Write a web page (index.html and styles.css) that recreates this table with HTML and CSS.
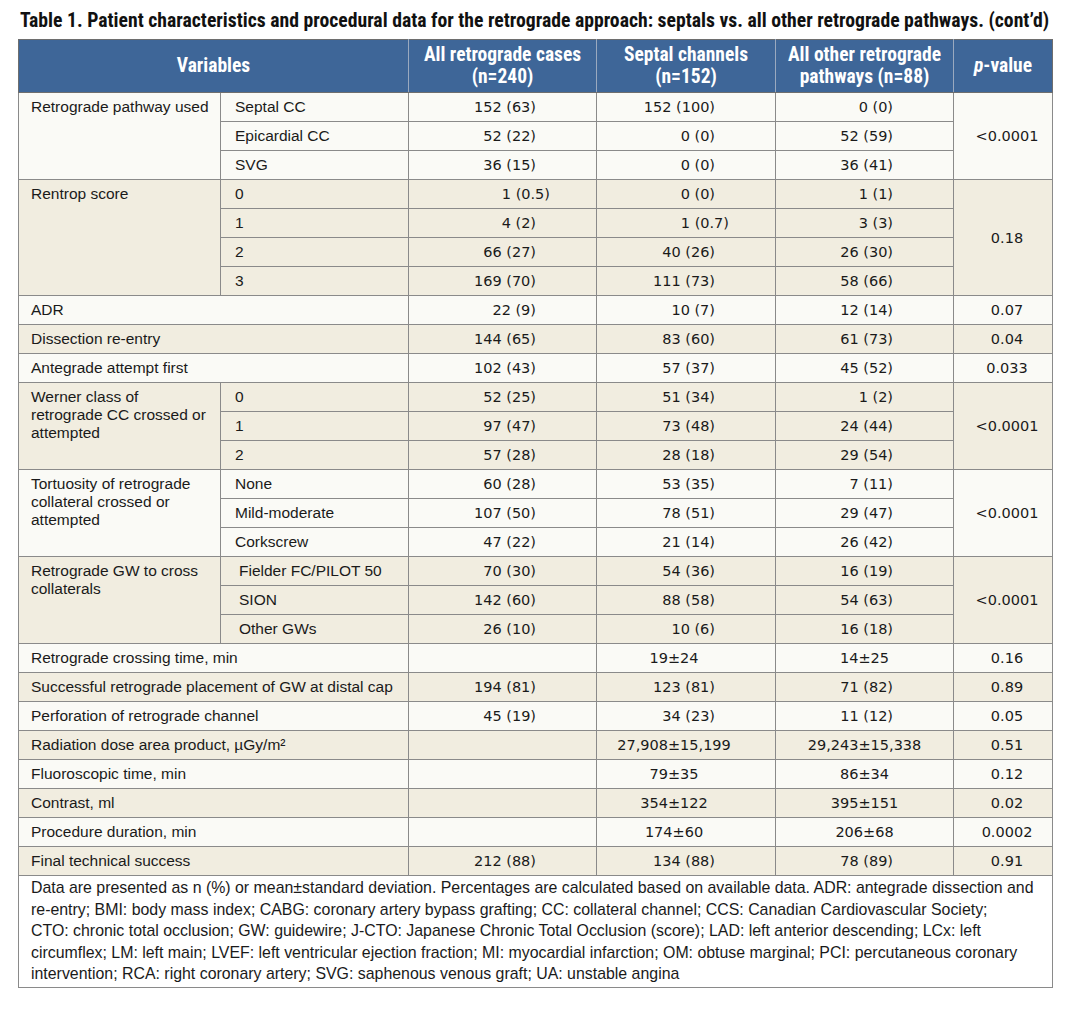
FILE: index.html
```html
<!DOCTYPE html>
<html lang="en">
<head>
<meta charset="utf-8">
<title>Table 1</title>
<link rel="stylesheet" href="styles.css">
</head>
<body>
<h1 class="caption">Table 1. Patient characteristics and procedural data for the retrograde approach: septals vs. all other retrograde pathways. (cont’d)</h1>
<table class="data">
  <colgroup>
    <col class="w1"><col class="w2"><col class="w3"><col class="w4"><col class="w5"><col class="w6">
  </colgroup>
  <thead>
    <tr>
      <th colspan="2">Variables</th>
      <th>All retrograde cases<br>(n=240)</th>
      <th>Septal channels<br>(n=152)</th>
      <th>All other retrograde<br>pathways (n=88)</th>
      <th><i>p</i>-value</th>
    </tr>
  </thead>
  <tbody>
    <tr class="lt">
      <td class="lbl" rowspan="3">Retrograde pathway used</td>
      <td class="sub">Septal CC</td><td class="n">152 (63)</td><td class="n">152 (100)</td><td class="n">0 (0)</td>
      <td class="p" rowspan="3">&lt;0.0001</td>
    </tr>
    <tr class="lt"><td class="sub">Epicardial CC</td><td class="n">52 (22)</td><td class="n">0 (0)</td><td class="n">52 (59)</td></tr>
    <tr class="lt"><td class="sub">SVG</td><td class="n">36 (15)</td><td class="n">0 (0)</td><td class="n">36 (41)</td></tr>

    <tr class="bg">
      <td class="lbl" rowspan="4">Rentrop score</td>
      <td class="sub">0</td><td class="n out">1 (0.5)</td><td class="n">0 (0)</td><td class="n">1 (1)</td>
      <td class="p" rowspan="4">0.18</td>
    </tr>
    <tr class="bg"><td class="sub">1</td><td class="n">4 (2)</td><td class="n out">1 (0.7)</td><td class="n">3 (3)</td></tr>
    <tr class="bg"><td class="sub">2</td><td class="n">66 (27)</td><td class="n">40 (26)</td><td class="n">26 (30)</td></tr>
    <tr class="bg"><td class="sub">3</td><td class="n">169 (70)</td><td class="n">111 (73)</td><td class="n">58 (66)</td></tr>

    <tr class="lt"><td class="lbl" colspan="2">ADR</td><td class="n">22 (9)</td><td class="n">10 (7)</td><td class="n">12 (14)</td><td class="p">0.07</td></tr>
    <tr class="bg"><td class="lbl" colspan="2">Dissection re-entry</td><td class="n">144 (65)</td><td class="n">83 (60)</td><td class="n">61 (73)</td><td class="p">0.04</td></tr>
    <tr class="lt"><td class="lbl" colspan="2">Antegrade attempt first</td><td class="n">102 (43)</td><td class="n">57 (37)</td><td class="n">45 (52)</td><td class="p">0.033</td></tr>

    <tr class="bg">
      <td class="lbl" rowspan="3">Werner class of retrograde CC crossed or attempted</td>
      <td class="sub">0</td><td class="n">52 (25)</td><td class="n">51 (34)</td><td class="n">1 (2)</td>
      <td class="p" rowspan="3">&lt;0.0001</td>
    </tr>
    <tr class="bg"><td class="sub">1</td><td class="n">97 (47)</td><td class="n">73 (48)</td><td class="n">24 (44)</td></tr>
    <tr class="bg"><td class="sub">2</td><td class="n">57 (28)</td><td class="n">28 (18)</td><td class="n">29 (54)</td></tr>

    <tr class="lt">
      <td class="lbl" rowspan="3">Tortuosity of retrograde collateral crossed or attempted</td>
      <td class="sub">None</td><td class="n">60 (28)</td><td class="n">53 (35)</td><td class="n">7 (11)</td>
      <td class="p" rowspan="3">&lt;0.0001</td>
    </tr>
    <tr class="lt"><td class="sub">Mild-moderate</td><td class="n">107 (50)</td><td class="n">78 (51)</td><td class="n">29 (47)</td></tr>
    <tr class="lt"><td class="sub">Corkscrew</td><td class="n">47 (22)</td><td class="n">21 (14)</td><td class="n">26 (42)</td></tr>

    <tr class="bg">
      <td class="lbl" rowspan="3">Retrograde GW to cross collaterals</td>
      <td class="sub ind">Fielder FC/PILOT 50</td><td class="n">70 (30)</td><td class="n">54 (36)</td><td class="n">16 (19)</td>
      <td class="p" rowspan="3">&lt;0.0001</td>
    </tr>
    <tr class="bg"><td class="sub ind">SION</td><td class="n">142 (60)</td><td class="n">88 (58)</td><td class="n">54 (63)</td></tr>
    <tr class="bg"><td class="sub ind">Other GWs</td><td class="n">26 (10)</td><td class="n">10 (6)</td><td class="n">16 (18)</td></tr>

    <tr class="lt"><td class="lbl" colspan="2">Retrograde crossing time, min</td><td class="n"></td><td class="m c4">19±24</td><td class="m">14±25</td><td class="p">0.16</td></tr>
    <tr class="bg"><td class="lbl" colspan="2">Successful retrograde placement of GW at distal cap</td><td class="n">194 (81)</td><td class="n">123 (81)</td><td class="n">71 (82)</td><td class="p">0.89</td></tr>
    <tr class="lt"><td class="lbl" colspan="2">Perforation of retrograde channel</td><td class="n">45 (19)</td><td class="n">34 (23)</td><td class="n">11 (12)</td><td class="p">0.05</td></tr>
    <tr class="bg"><td class="lbl" colspan="2">Radiation dose area product, µGy/m²</td><td class="n"></td><td class="m c4">27,908±15,199</td><td class="m">29,243±15,338</td><td class="p">0.51</td></tr>
    <tr class="lt"><td class="lbl" colspan="2">Fluoroscopic time, min</td><td class="n"></td><td class="m c4">79±35</td><td class="m">86±34</td><td class="p">0.12</td></tr>
    <tr class="bg"><td class="lbl" colspan="2">Contrast, ml</td><td class="n"></td><td class="m c4">354±122</td><td class="m">395±151</td><td class="p">0.02</td></tr>
    <tr class="lt"><td class="lbl" colspan="2">Procedure duration, min</td><td class="n"></td><td class="m c4">174±60</td><td class="m">206±68</td><td class="p">0.0002</td></tr>
    <tr class="bg"><td class="lbl" colspan="2">Final technical success</td><td class="n">212 (88)</td><td class="n">134 (88)</td><td class="n">78 (89)</td><td class="p">0.91</td></tr>
  </tbody>
  <tfoot>
    <tr>
      <td colspan="6" class="note">Data are presented as n (%) or mean±standard deviation. Percentages are calculated based on available data. ADR: antegrade dissection and<br>re-entry; BMI: body mass index; CABG: coronary artery bypass grafting; CC: collateral channel; CCS: Canadian Cardiovascular Society;<br>CTO: chronic total occlusion; GW: guidewire; J-CTO: Japanese Chronic Total Occlusion (score); LAD: left anterior descending; LCx: left<br>circumflex; LM: left main; LVEF: left ventricular ejection fraction; MI: myocardial infarction; OM: obtuse marginal; PCI: percutaneous coronary<br>intervention; RCA: right coronary artery; SVG: saphenous venous graft; UA: unstable angina</td>
    </tr>
  </tfoot>
</table>
</body>
</html>
```

FILE: styles.css
```css
html, body {
  margin: 0;
  padding: 0;
  background: #ffffff;
}
body {
  padding: 8px 20px 0 18px;
  color: #1a1a1a;
  font-family: "Liberation Sans", Arial, sans-serif;
}
.caption {
  margin: 0 0 6px 2px;
  font-family: "Roboto", "Liberation Sans", sans-serif;
  font-stretch: 75%;
  font-weight: bold;
  font-size: 19.7px;
  line-height: 25px;
  white-space: nowrap;
  color: #111;
}
.data {
  border-collapse: collapse;
  width: 1034px;
  table-layout: fixed;
  border: 1px solid #6e6e6e;
}
.w1 { width: 202px; }
.w2 { width: 188px; }
.w3 { width: 188px; }
.w4 { width: 179px; }
.w5 { width: 178px; }
.w6 { width: 99px; }

.data th {
  background: #3e6698;
  color: #ffffff;
  font-family: "Roboto", "Liberation Sans", sans-serif;
  font-stretch: 75%;
  font-weight: bold;
  font-size: 19.5px;
  line-height: 22px;
  height: 52px;
  padding: 0 4px;
  text-align: center;
  vertical-align: middle;
  border: 1px solid #9aa9bf;
  border-top-color: #6e6e6e;
  border-bottom-color: #6e6e6e;
}
.data th:first-child { border-left-color: #6e6e6e; }
.data th:last-child { border-right-color: #6e6e6e; }

.data td {
  height: 28px;
  padding: 0;
  border: 1px solid #8a8a8a;
  vertical-align: middle;
  font-size: 15.5px;
  line-height: 18px;
}
.lt td { background: #fafaf6; }
.bg td { background: #f1ede0; }

.lbl {
  padding: 0 10px 0 12px !important;
  vertical-align: top !important;
  padding-top: 5px !important;
}
.lbl[colspan] { vertical-align: middle !important; padding-top: 0 !important; }
.sub { padding-left: 14px !important; }
.sub.ind { padding-left: 18px !important; }

.n, .m, .p {
  font-family: "DejaVu Sans", Verdana, sans-serif;
  font-size: 14.5px !important;
  color: #1a1a1a;
}
.n { text-align: right; padding-right: 60px !important; }
.n.out { padding-right: 46px !important; }
.m { text-align: center; }
.m.c4 { padding-right: 24px !important; }
.p { text-align: center; padding-left: 8px !important; }

.note {
  background: #ffffff;
  padding: 1px 12px 2px 12px !important;
  font-size: 15.9px !important;
  line-height: 21.6px !important;
  height: auto !important;
  white-space: nowrap;
  vertical-align: top;
}
```
